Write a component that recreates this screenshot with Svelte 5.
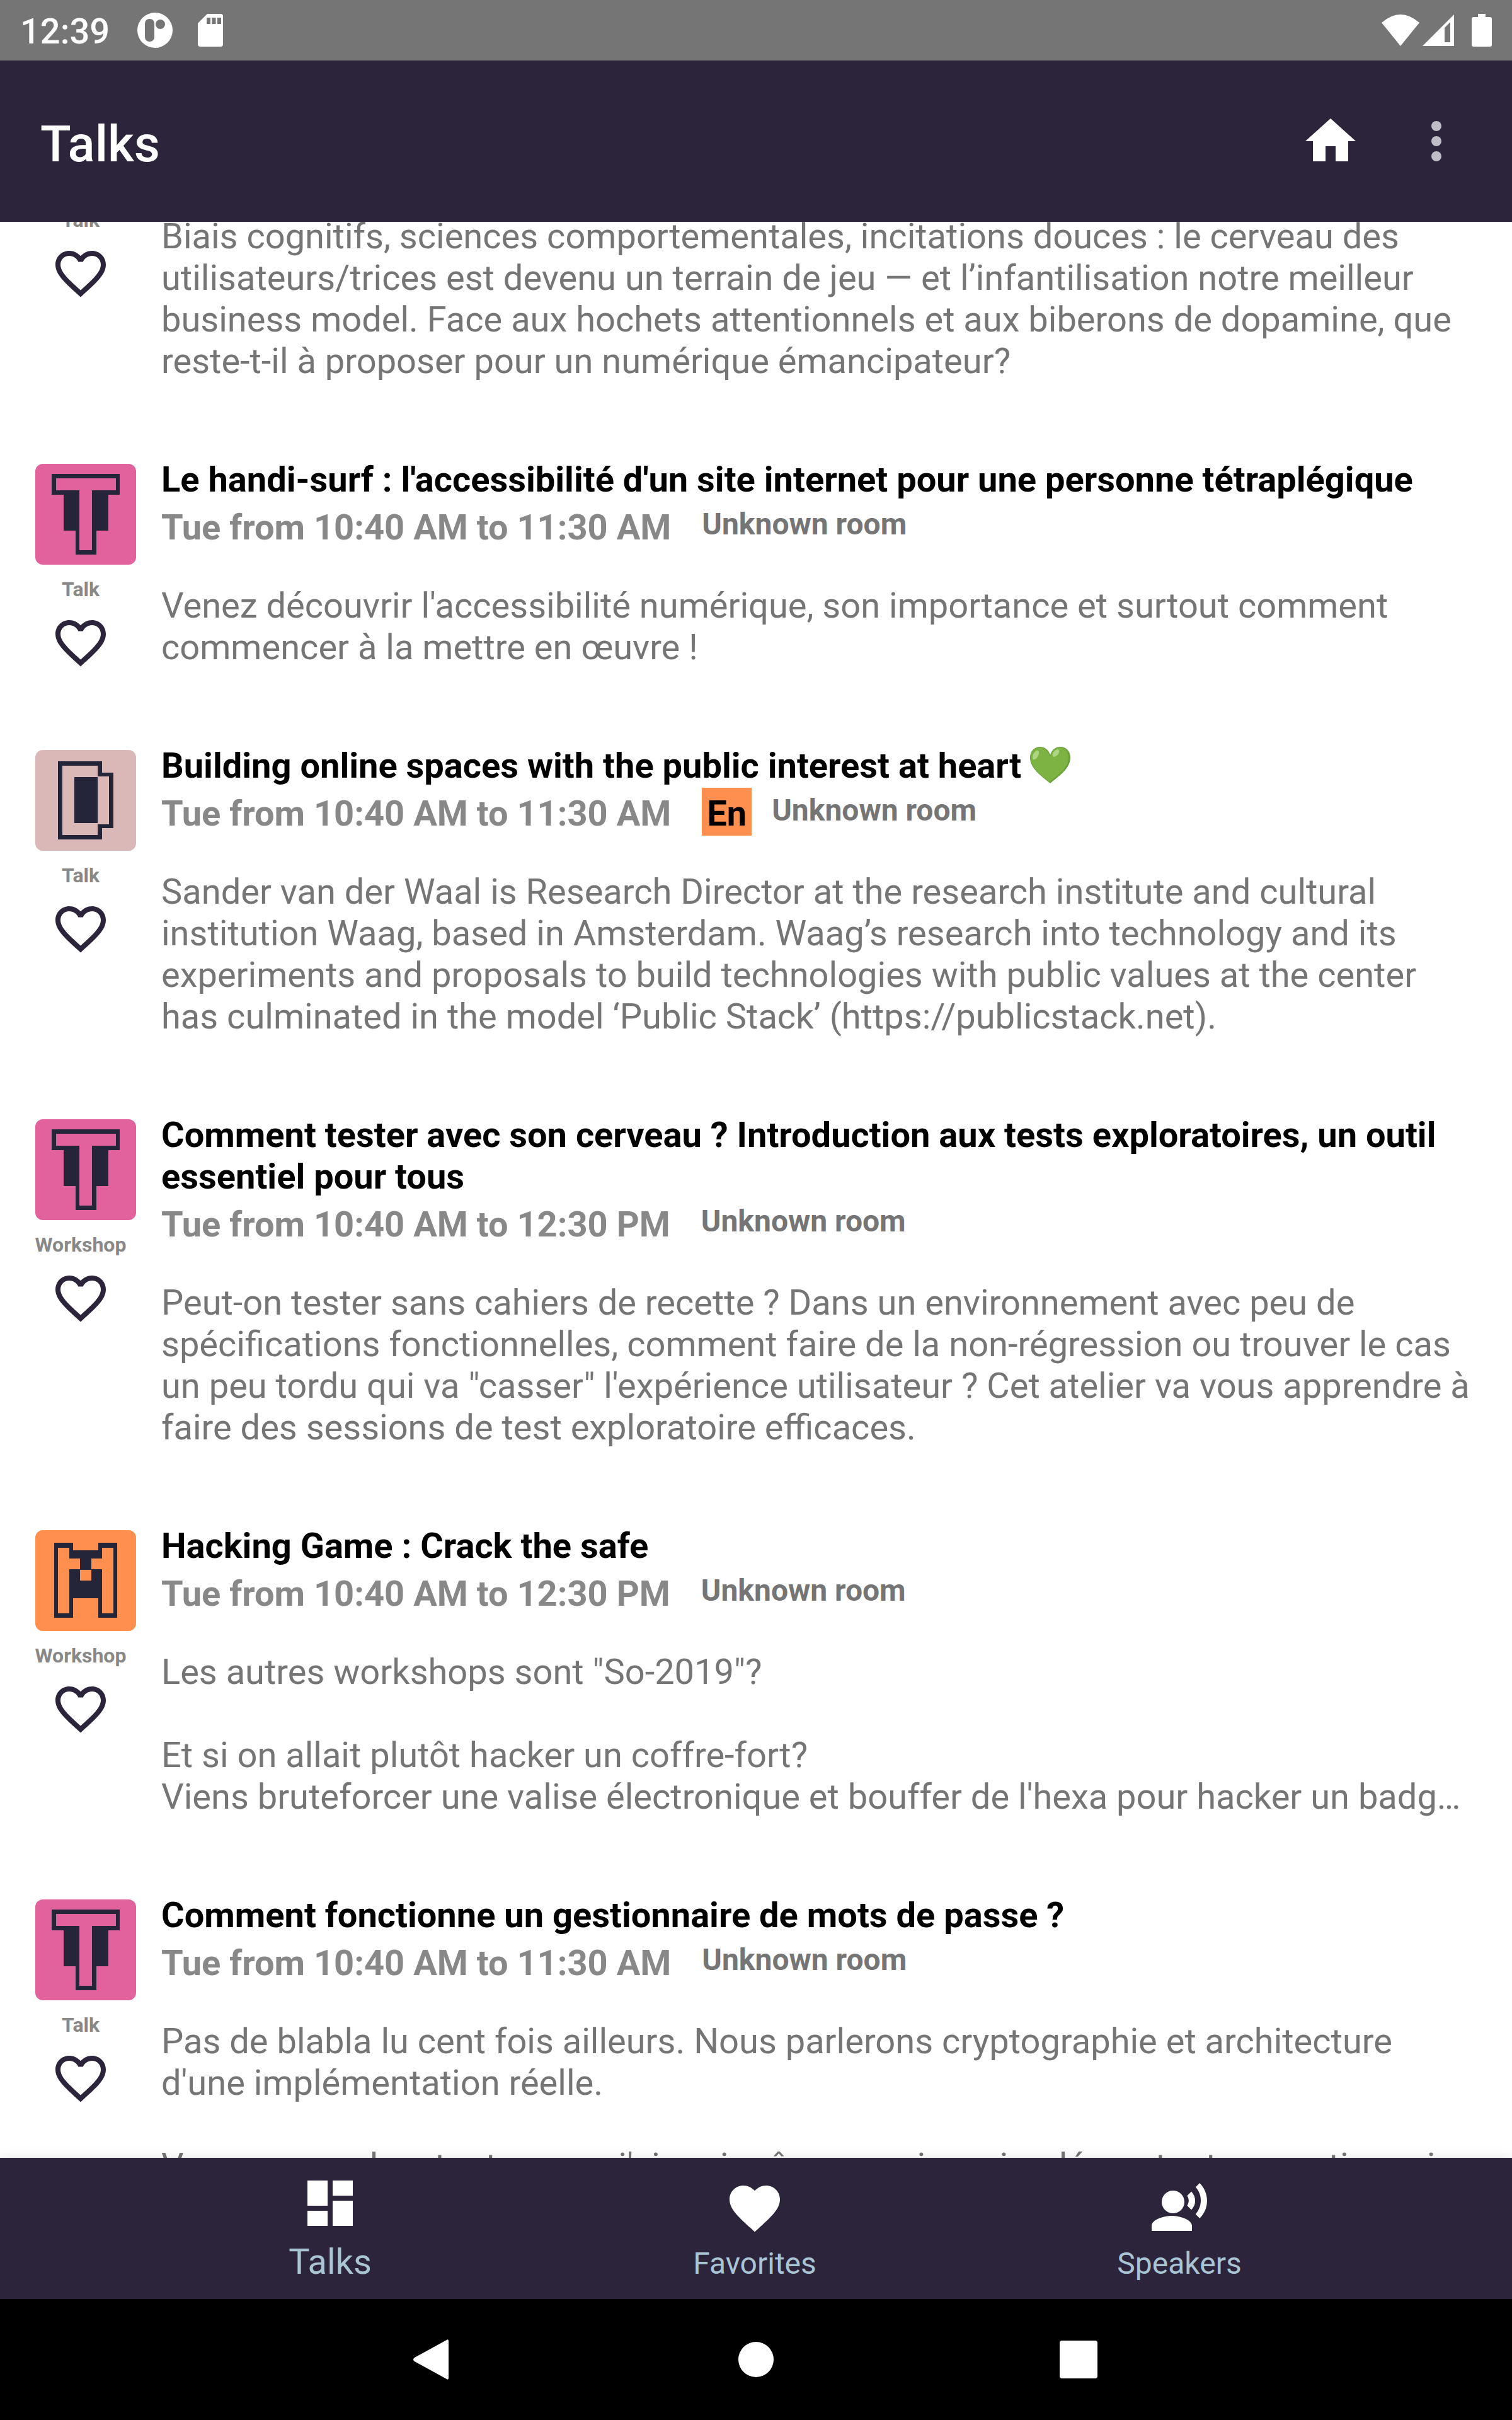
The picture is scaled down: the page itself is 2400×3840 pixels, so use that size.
<script>
  import { onMount } from 'svelte';

  let list;
  let active = $state('talks');
  let favorites = $state({});

  const tabs = [
    { id: 'talks', label: 'Talks' },
    { id: 'favorites', label: 'Favorites' },
    { id: 'speakers', label: 'Speakers' },
  ];

  const talks = [
    {
      track: 't',
      kind: 'Talk',
      title: 'Pour un numérique émancipateur',
      time: 'Tue from 10:40 AM to 11:30 AM',
      text: 'Biais cognitifs, sciences comportementales, incitations douces : le cerveau des utilisateurs/trices est devenu un terrain de jeu — et l’infantilisation notre meilleur business model. Face aux hochets attentionnels et aux biberons de dopamine, que reste-t-il à proposer pour un numérique émancipateur?',
    },
    {
      track: 't',
      kind: 'Talk',
      title: "Le handi-surf : l'accessibilité d'un site internet pour une personne tétraplégique",
      time: 'Tue from 10:40 AM to 11:30 AM',
      text: "Venez découvrir l'accessibilité numérique, son importance et surtout comment commencer à la mettre en œuvre !",
    },
    {
      track: 'd',
      kind: 'Talk',
      title: 'Building online spaces with the public interest at heart',
      heart: true,
      english: true,
      time: 'Tue from 10:40 AM to 11:30 AM',
      text: 'Sander van der Waal is Research Director at the research institute and cultural institution Waag, based in Amsterdam. Waag’s research into technology and its experiments and proposals to build technologies with public values at the center has culminated in the model ‘Public Stack’ (https://publicstack.net).',
    },
    {
      track: 't',
      kind: 'Workshop',
      title: 'Comment tester avec son cerveau ? Introduction aux tests exploratoires, un outil essentiel pour tous',
      time: 'Tue from 10:40 AM to 12:30 PM',
      text: 'Peut-on tester sans cahiers de recette ? Dans un environnement avec peu de spécifications fonctionnelles, comment faire de la non-régression ou trouver le cas un peu tordu qui va "casser" l\'expérience utilisateur ? Cet atelier va vous apprendre à faire des sessions de test exploratoire efficaces.',
    },
    {
      track: 'm',
      kind: 'Workshop',
      title: 'Hacking Game : Crack the safe',
      time: 'Tue from 10:40 AM to 12:30 PM',
      text: 'Les autres workshops sont "So-2019"?\n\nEt si on allait plutôt hacker un coffre-fort?\nViens bruteforcer une valise électronique et bouffer de l\'hexa pour hacker un badg…',
    },
    {
      track: 't',
      kind: 'Talk',
      title: 'Comment fonctionne un gestionnaire de mots de passe ?',
      time: 'Tue from 10:40 AM to 11:30 AM',
      text: "Pas de blabla lu cent fois ailleurs. Nous parlerons cryptographie et architecture d'une implémentation réelle.\n\nVous apprendrez tout ce que j'ai moi-même appris en implémentant ce gestionnaire",
    },
  ];

  onMount(() => {
    list.scrollTop = 210;
  });
</script>

<div class="screen">
  <div class="status">
    <span class="clock">12:39</span>
    <svg class="s-app" viewBox="0 0 56 56" aria-hidden="true">
      <circle cx="28" cy="28" r="28" fill="#fff" />
      <rect x="12" y="10" width="15" height="36" rx="7" fill="#757575" />
      <circle cx="36.500" cy="18.500" r="7.500" fill="#757575" />
    </svg>
    <svg class="s-card" viewBox="0 0 40 52" aria-hidden="true">
      <path d="M15 0H36Q40 0 40 4V48Q40 52 36 52H4Q0 52 0 48V15Z" fill="#fff" />
      <path d="M14 6H20V16H14ZM22.500 6H28.500V16H22.500ZM31 6H37V16H31Z" fill="#757575" />
    </svg>
    <span class="grow"></span>
    <svg class="s-wifi" viewBox="0 0 60 50" aria-hidden="true">
      <path d="M0 13Q30-13 60 13L30 50Z" fill="#fff" />
    </svg>
    <svg class="s-cell" viewBox="0 0 50 50" aria-hidden="true">
      <path d="M50 0V50H0ZM44 12L35 21V44H44Z" fill="#fff" fill-rule="evenodd" />
    </svg>
    <svg class="s-batt" viewBox="0 0 32 52" aria-hidden="true">
      <path d="M10 0H22V5H29Q32 5 32 8V49Q32 52 29 52H3Q0 52 0 49V8Q0 5 3 5H10Z" fill="#fff" />
    </svg>
  </div>

  <header class="appbar">
    <h1>Talks</h1>
    <button class="icon-btn" aria-label="Home">
      <svg viewBox="0 0 24 24"><path d="M10 20v-6h4v6h5v-8h3L12 3 2 12h3v8z" fill="#fff" /></svg>
    </button>
    <button class="icon-btn" aria-label="More options">
      <svg viewBox="0 0 24 24">
        <g fill="#c0bdc4"><circle cx="12" cy="6" r="2" /><circle cx="12" cy="12" r="2" /><circle cx="12" cy="18" r="2" /></g>
      </svg>
    </button>
  </header>

  <main class="list" bind:this={list}>
    {#each talks as talk, i}
      <article class="talk">
        <div class="side">
          <svg class="tile {talk.track}" viewBox="0 0 160 160" aria-hidden="true">
            {#if talk.track === 't'}
              <path class="ink" d="M26 16H134V49H116V106H97V144H64V106H45V49H26Z" />
              <path class="fill" d="M33 23H128V42H90V137H70V42H33Z" />
            {:else if talk.track === 'd'}
              <path class="ink" d="M36 18H106V36H124V124H106V142H36Z" />
              <path class="fill" d="M43 25H99V42H117V118H99V135H43Z" />
              <path class="ink" d="M62 43H99V116H62Z" />
            {:else}
              <path class="ink" d="M30 20H60V32H100V20H130V139H100V108H60V139H30Z" />
              <path class="fill" d="M36 28H54V45H71V62H54V132H36ZM124 28H106V45H89V62H106V132H124ZM71 63H89V80H71Z" />
            {/if}
          </svg>
          <div class="meta">
            <span class="kind">{talk.kind}</span>
            <button
              class="icon-btn"
              aria-label="Favorite"
              aria-pressed={!!favorites[i]}
              onclick={() => (favorites[i] = !favorites[i])}
            >
              <svg viewBox="0 0 24 24">
                {#if favorites[i]}
                  <path d="M12 21.350l-1.450-1.320C5.400 15.360 2 12.280 2 8.500 2 5.420 4.420 3 7.500 3c1.740 0 3.410.810 4.500 2.090C13.090 3.810 14.760 3 16.500 3 19.580 3 22 5.420 22 8.500c0 3.780-3.400 6.860-8.550 11.540L12 21.350z" fill="#2c243b" />
                {:else}
                  <path d="M16.500 3c-1.740 0-3.410.810-4.500 2.090C10.910 3.810 9.240 3 7.500 3 4.420 3 2 5.420 2 8.500c0 3.780 3.400 6.860 8.550 11.540L12 21.350l1.450-1.320C18.600 15.360 22 12.280 22 8.500 22 5.420 19.580 3 16.500 3zm-4.400 15.550l-.1.100-.1-.1C7.140 14.240 4 11.390 4 8.500 4 6.500 5.500 5 7.500 5c1.540 0 3.040.990 3.570 2.360h1.870C13.460 5.990 14.960 5 16.500 5c2 0 3.500 1.500 3.500 3.500 0 2.890-3.140 5.740-7.900 10.050z" fill="#2c243b" />
                {/if}
              </svg>
            </button>
          </div>
        </div>

        <div class="body">
          <h2>
            {talk.title}
            {#if talk.heart}
              <svg class="emoji" viewBox="0 0 64 58" role="img" aria-label="green heart">
                <path d="M32 58C22 49 0 36 0 17C0 7 7 0 16 0C24 0 30 6 32 13C34 6 40 0 48 0C57 0 64 7 64 17C64 36 42 49 32 58Z" fill="#689f38" />
                <path d="M31 56C21 47 1 35 1 17C1 7 7 1 16 1C24 1 29 8 32 16C34 8 40 1 47 1C56 1 61 8 61 17C61 35 41 47 31 56Z" fill="#7cb342" />
                <ellipse cx="9" cy="13" rx="4" ry="8" transform="rotate(28 9 13)" fill="#aed581" />
                <ellipse cx="41" cy="10" rx="4" ry="7" transform="rotate(40 41 10)" fill="#aed581" />
              </svg>
            {/if}
          </h2>
          <div class="when">
            <time>{talk.time}</time>
            {#if talk.english}<span class="lang">En</span>{/if}
            <span class="room">Unknown room</span>
          </div>
          <p>{talk.text}</p>
        </div>
      </article>
    {/each}
  </main>

  <nav class="tabs">
    {#each tabs as tab}
      <button class="tab" class:active={active === tab.id} onclick={() => (active = tab.id)}>
        <svg viewBox="0 0 24 24" aria-hidden="true">
          {#if tab.id === 'talks'}
            <path d="M3 13h8V3H3v10zm0 8h8v-6H3v6zm10 0h8V11h-8v10zm0-18v6h8V3h-8z" />
          {:else if tab.id === 'favorites'}
            <path d="M12 21.350l-1.450-1.320C5.400 15.360 2 12.280 2 8.500 2 5.420 4.420 3 7.500 3c1.740 0 3.410.810 4.500 2.090C13.090 3.810 14.760 3 16.500 3 19.580 3 22 5.420 22 8.500c0 3.780-3.400 6.860-8.550 11.540L12 21.350z" />
          {:else}
            <circle cx="9.500" cy="9.500" r="4.500" />
            <path d="M9 15c-2.670 0-8 1.340-8 4v2h16v-2c0-2.660-5.330-4-8-4zM16.760 5.360l-1.680 1.690c.840 1.180.840 2.710 0 3.890l1.680 1.690c2.020-2.020 2.020-5.070 0-7.270zM20.070 2l-1.630 1.630c2.770 3.020 2.770 7.560 0 10.740L20.070 16c3.900-3.890 3.910-9.950 0-14z" />
          {/if}
        </svg>
        <span>{tab.label}</span>
      </button>
    {/each}
  </nav>

  <div class="system">
    <button class="icon-btn" aria-label="Back">
      <svg viewBox="0 0 96 96"><path d="M69 17Q72 15 72 19V77Q72 81 69 79L18 51Q14 48 18 45Z" fill="#fff" /></svg>
    </button>
    <button class="icon-btn" aria-label="Home screen">
      <svg viewBox="0 0 96 96"><circle cx="48" cy="48" r="28" fill="#fff" /></svg>
    </button>
    <button class="icon-btn" aria-label="Recent apps">
      <svg viewBox="0 0 96 96"><rect x="18" y="18" width="60" height="60" rx="4" fill="#fff" /></svg>
    </button>
  </div>
</div>

<style>
  :global(body) {
    margin: 0;
  }

  .screen {
    height: 100vh;
    display: flex;
    flex-direction: column;
    overflow: hidden;
    background: #fff;
    font-family: Roboto, 'Noto Sans', sans-serif;
    font-size: 56px;
    line-height: 66px;
  }

  svg {
    display: block;
    flex: none;
  }

  button {
    border: 0;
    padding: 0;
    background: none;
    font: inherit;
    cursor: pointer;
  }

  .icon-btn,
  .icon-btn svg {
    width: 96px;
    height: 96px;
    flex: none;
  }

  .status {
    flex: none;
    height: 96px;
    box-sizing: border-box;
    padding: 0 32px;
    display: flex;
    align-items: center;
    background: #757575;
    color: #fff;
  }

  .clock {
    font-weight: 500;
    padding-top: 4px;
  }

  .grow {
    flex: 1;
  }

  .s-app {
    width: 56px;
    margin-left: 44px;
  }

  .s-card {
    width: 40px;
    margin-left: 40px;
  }

  .s-wifi {
    width: 60px;
  }

  .s-cell {
    width: 50px;
    margin: 0 28px 0 5px;
  }

  .s-batt {
    width: 32px;
  }

  .appbar {
    flex: none;
    height: 256px;
    box-sizing: border-box;
    padding: 0 72px 0 64px;
    display: flex;
    align-items: center;
    gap: 72px;
    background: #2c243b;
    color: #fff;
  }

  h1 {
    flex: 1;
    margin: 0;
    padding-top: 10px;
    font-size: 80px;
    line-height: 94px;
    font-weight: 500;
  }

  .list {
    flex: 1;
    min-height: 0;
    overflow-y: auto;
    scrollbar-width: none;
  }

  .talk {
    display: grid;
    grid-template-columns: 160px 1fr;
    column-gap: 40px;
    padding: 0 56px 122px;
  }

  .side {
    padding-top: 8px;
    height: 323px;
  }

  .tile {
    width: 160px;
    height: 160px;
    border-radius: 12px;
  }

  .ink {
    fill: #252539;
  }

  .tile.t {
    background: #e2629e;
  }

  .tile.t .fill {
    fill: #e2629e;
  }

  .tile.d {
    background: #dab8b8;
  }

  .tile.d .fill {
    fill: #dab8b8;
  }

  .tile.m {
    background: #ff8f4f;
  }

  .tile.m .fill {
    fill: #ff8f4f;
  }

  .meta {
    width: 144px;
    margin-top: 20px;
    display: flex;
    flex-direction: column;
    align-items: center;
    gap: 18px;
  }

  .kind {
    font-size: 32px;
    line-height: 38px;
    font-weight: 700;
    color: #888;
  }

  .body {
    min-width: 0;
  }

  h2 {
    margin: 0;
    font-size: 56px;
    line-height: 66px;
    font-weight: 700;
    color: #000;
  }

  .emoji {
    display: inline-block;
    width: 64px;
    height: 58px;
    vertical-align: -9px;
  }

  .when {
    margin: 10px 0 58px;
    height: 66px;
    display: flex;
    align-items: flex-start;
    font-weight: 700;
  }

  time {
    color: #888;
    margin-right: 49px;
  }

  .lang {
    margin: -8px 32px 0 0;
    padding: 8px 8px 2px;
    background: #ff8f4f;
    color: #000;
  }

  .room {
    font-size: 48px;
    line-height: 56px;
    color: #757575;
  }

  p {
    margin: 0;
    color: #757575;
    white-space: pre-line;
  }

  .tabs {
    position: relative;
    flex: none;
    height: 224px;
    box-sizing: border-box;
    padding-right: 4px;
    display: flex;
    justify-content: center;
    background: #2c243b;
    box-shadow: 0 0 20px rgba(0, 0, 0, 0.1);
  }

  .tab {
    flex: 0 1 674px;
    padding-top: 32px;
    display: flex;
    flex-direction: column;
    align-items: center;
    gap: 12px;
    font-size: 48px;
    line-height: 56px;
    color: #a9c5d3;
  }

  .tab svg {
    width: 96px;
    height: 96px;
    fill: #fff;
  }

  .tab.active {
    padding-top: 24px;
    font-size: 56px;
    line-height: 66px;
  }

  .system {
    flex: none;
    height: 192px;
    display: flex;
    justify-content: center;
    align-items: center;
    gap: 416px;
    background: #000;
  }
</style>
